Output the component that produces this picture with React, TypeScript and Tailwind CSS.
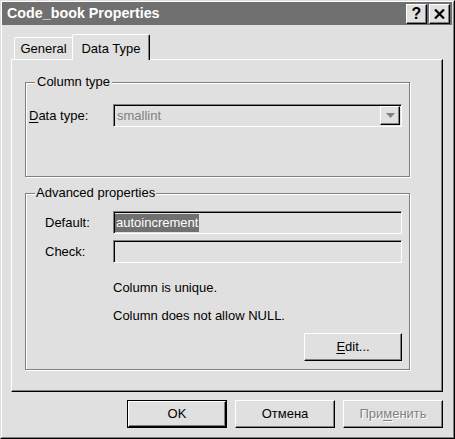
import React from "react";

const raised =
  "border border-t-white border-l-white border-r-black border-b-black shadow-[inset_-1px_-1px_0_#808080]";
const sunken =
  "border border-t-[#808080] border-l-[#808080] border-r-white border-b-white shadow-[inset_1px_1px_0_#000]";
const etched =
  "border border-[#808080] shadow-[inset_1px_1px_0_#fff,1px_1px_0_#fff]";

function Btn({ children, def, disabled, w = "w-[100px]" }: { children: React.ReactNode; def?: boolean; disabled?: boolean; w?: string }) {
  const inner = (
    <div className={`${raised} h-full w-full flex items-center justify-center bg-[#e0e0e0] ${disabled ? "text-[#808080] [text-shadow:1px_1px_0_#fff]" : "text-black"}`}>
      {children}
    </div>
  );
  return def ? (
    <div className={`${w} h-[28px] border border-black`}>{inner}</div>
  ) : (
    <div className={`${w} h-[28px]`}>{inner}</div>
  );
}

export default function App() {
  return (
    <div className="w-[455px] h-[439px] border border-t-[#dfdfdf] border-l-[#dfdfdf] border-r-black border-b-black font-['Liberation_Sans',Arial,sans-serif] text-[13px] text-black">
      <div className="h-full flex flex-col bg-[#e0e0e0] border border-t-white border-l-white border-r-[#808080] border-b-[#808080]">
        {/* Title bar */}
        <div className="h-[23px] bg-[#707070] flex items-center pl-[5px] pr-[2px] mr-[1px]">
          <span className="text-white font-bold text-[14.3px] leading-none">Code_book Properties</span>
          <div className="ml-auto flex gap-[2px]">
            <div className={`${raised} w-[21px] h-[20px] bg-[#e0e0e0] flex items-center justify-center font-bold text-[16px] leading-none`}>?</div>
            <div className={`${raised} w-[21px] h-[20px] bg-[#e0e0e0] flex items-center justify-center`}>
              <svg width="11" height="10" viewBox="0 0 11 10">
                <path d="M1 0.5 L10 9.5 M10 0.5 L1 9.5" stroke="#000" strokeWidth="2.2" />
              </svg>
            </div>
          </div>
        </div>

        {/* Tabs */}
        <div className="ml-[9px] mr-[10px] mt-[9px] flex flex-col">
          <div className="flex items-end h-[25px] pl-[3px]">
            <div className="w-[58px] h-[22px] border-t border-l border-white rounded-tl-[2px] flex items-center justify-center pt-[1px]">
              General
            </div>
            <div className="relative z-10 -mb-[1px] w-[78px] h-[26px] bg-[#e0e0e0] border-t border-l border-r border-t-white border-l-white border-r-black shadow-[inset_-1px_0_0_#808080] rounded-t-[2px] flex items-start justify-center pt-[4px]">
              Data Type
            </div>
          </div>
          {/* Panel */}
          <div className="h-[333px] border border-t-white border-l-white border-r-black border-b-black shadow-[inset_-1px_-1px_0_#808080] pl-[13px] pr-[32px] pt-[22px]">
            {/* Column type */}
            <div className={`relative ${etched} h-[95px]`}>
              <span className="absolute -top-[9px] left-[9px] bg-[#e0e0e0] px-[2px] leading-[16px]">Column type</span>
              <div className="flex items-center mt-[21px] pl-[3px] pr-[7px]">
                <span className="w-[84px]"><span className="underline underline-offset-2">D</span>ata type:</span>
                <div className={`${sunken} flex-1 h-[23px] flex items-center pl-[3px] pr-[1px]`}>
                  <span className="text-[#808080] flex-1">smallint</span>
                  <div className={`${raised} w-[20px] h-[19px] bg-[#e0e0e0] flex items-center justify-center`}>
                    <svg width="9" height="5" viewBox="0 0 9 5"><path d="M0 0 H9 L4.5 5 Z" fill="#808080" /></svg>
                  </div>
                </div>
              </div>
            </div>

            {/* Advanced properties */}
            <div className={`relative ${etched} h-[177px] mt-[16px] pl-[19px] pr-[7px]`}>
              <span className="absolute -top-[9px] left-[9px] bg-[#e0e0e0] px-[1px] leading-[16px]">Advanced properties</span>
              <div className="flex items-center mt-[17px]">
                <span className="w-[68px]">Default:</span>
                <div className={`${sunken} flex-1 h-[23px] flex items-center pl-[1px]`}>
                  <span className="bg-[#707070] text-white px-[1px] leading-[18px]">autoincrement</span>
                </div>
              </div>
              <div className="flex items-center mt-[6px]">
                <span className="w-[68px]">Check:</span>
                <div className={`${sunken} flex-1 h-[23px]`} />
              </div>
              <div className="pl-[68px] mt-[17px] leading-[16px]">Column is unique.</div>
              <div className="pl-[68px] mt-[12px] leading-[16px]">Column does not allow NULL.</div>
              <div className="flex justify-end mt-[9px]">
                <Btn w="w-[98px]">
                  <span><span className="underline underline-offset-2">E</span>dit...</span>
                </Btn>
              </div>
            </div>
          </div>
        </div>

        {/* Bottom buttons */}
        <div className="flex justify-end gap-[8px] mt-[8px] mr-[10px]">
          <Btn def>OK</Btn>
          <Btn>Отмена</Btn>
          <Btn disabled>
            <span>При<span className="underline underline-offset-2">м</span>енить</span>
          </Btn>
        </div>
      </div>
    </div>
  );
}
